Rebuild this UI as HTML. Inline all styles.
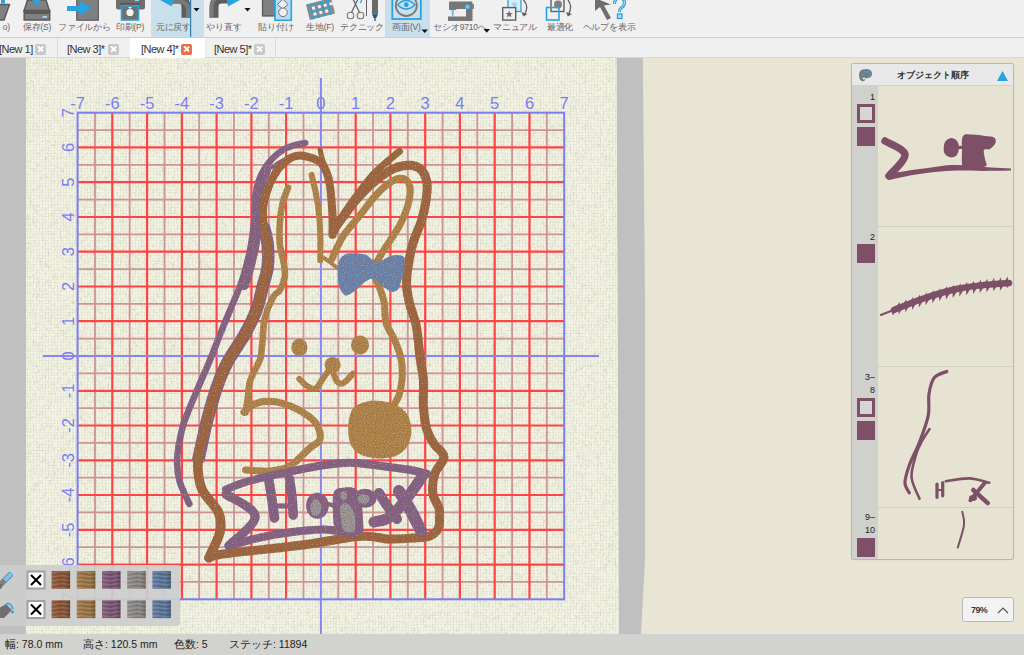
<!DOCTYPE html>
<html><head><meta charset="utf-8">
<style>
*{margin:0;padding:0;box-sizing:border-box}
html,body{width:1024px;height:655px;overflow:hidden;background:#f0f0f0;font-family:"Liberation Sans",sans-serif;position:relative}
.abs{position:absolute}
#toolbar{left:0;top:0;width:1024px;height:38px;background:#f0f0f0;border-bottom:1px solid #cfcfcf}
.tb{position:absolute;top:0;height:37px}
.tb .lbl{position:absolute;top:22px;left:0;width:100%;text-align:center;font-size:8.5px;color:#666;white-space:nowrap;letter-spacing:-0.2px}
#tabs{left:0;top:38px;width:1024px;height:20px;background:#f0f0f0;border-bottom:1px solid #d8d8d8}
.tab{position:absolute;top:2px;height:19px;font-size:11px;color:#333;line-height:19px;white-space:nowrap;letter-spacing:-0.5px}
.cx{position:absolute;top:5.5px;width:11px;height:11px;background:#c8c8c8;border-radius:2px}
.cx:before,.cx:after{content:"";position:absolute;left:1.8px;top:4.6px;width:7.4px;height:1.8px;background:#fff;transform:rotate(45deg)}
.cx:after{transform:rotate(-45deg)}
#leftgray{left:0;top:58px;width:26px;height:597px;background:#c0c0c0}
#fabric{left:26px;top:58px;width:590px;height:576px;background:#ebeadc}
#rgray{left:616px;top:58px;width:27px;height:576px;background:#c0c0c0}
#beige{left:630px;top:58px;width:394px;height:597px;background:#e8e5d4}
#status{left:0;top:634px;width:1024px;height:21px;background:#d2d2ce;font-size:10.5px;color:#222}
#status span{position:absolute;top:4px}
svg text{font-family:"Liberation Sans",sans-serif}
.mn{stroke:#cc9494;stroke-width:1.8}
.mj{stroke:#ff4444;stroke-width:2.2}
.bd{stroke:#7d7df2;stroke-width:2;fill:none}
.ax{stroke:#8a86f0;stroke-width:2}
.lx{font-size:16.5px;fill:#7c7cf6;text-anchor:middle}
.ly{font-size:16.5px;fill:#7c7cf6;text-anchor:middle}
#pal{left:0;top:565px;width:180px;height:61px;background:rgba(205,205,205,.92);border-radius:0 3px 3px 0}
.sw{position:absolute;width:19px;height:19px}
.xb{position:absolute;width:19px;height:19px;background:#fff;border:2px solid #a8a8a8}
#panel{left:851px;top:63px;width:163px;height:497px;background:#e7e3d2;border:1px solid #b9b9b4;border-radius:3px;box-shadow:0 0 1px rgba(0,0,0,.2)}
#phead{left:0;top:0;width:161px;height:22px;background:#e8e8e8;border-bottom:1px solid #d0d0cc}
#pcol{left:0;top:22px;width:26px;height:473px;background:#d0d0cc}
.num{position:absolute;font-size:9px;color:#222;text-align:right;width:23px;left:0}
.osq{position:absolute;left:4.5px;width:18.5px;height:18.5px;border:3px solid #7e5068;background:#d6d6d2}
.fsq{position:absolute;left:4.5px;width:18.5px;height:18.5px;background:#7e5068}
.sep{position:absolute;left:26px;width:135px;height:1px;background:#d0cfc5}
#zoom{left:962px;top:597px;width:52px;height:25px;background:#f3f3f3;border:1px solid #b8b8b8;border-radius:3px;font-size:9px;color:#222}
</style></head><body>
<div id="toolbar" class="abs">
<div class="abs" style="left:151px;top:0;width:53px;height:37px;background:#c9e0ec"></div>
<div class="abs" style="left:385px;top:0;width:45px;height:37px;background:#c9e0ec"></div>
<svg class="abs" style="left:0;top:0" width="640" height="37" viewBox="0 0 640 37">
<!-- folder partial -->
<rect x="1" y="0" width="4" height="3.5" fill="#29a3e0"/>
<path d="M-2,4.5 L9.5,4.5 L4,20 L-2,20 Z" fill="#808080" stroke="#5a5a5a" stroke-width="1.5" stroke-linejoin="round"/>
<!-- save -->
<path d="M27.5,0 L46,0 L49.5,11 L24,11 Z" fill="#808080" stroke="#5a5a5a" stroke-width="1.5"/>
<path d="M32.5,0 L40.5,0 L36.5,7 Z" fill="#29a3e0"/>
<rect x="24.2" y="10.5" width="25.5" height="9.5" fill="#808080" stroke="#5a5a5a" stroke-width="1.5"/>
<rect x="24.2" y="10.5" width="25.5" height="3.5" fill="#5a5a5a"/>
<rect x="42.5" y="16" width="4.5" height="1.8" fill="#9fd4f0"/>
<!-- file from -->
<rect x="76.8" y="-1" width="21.5" height="21.2" fill="#808080" stroke="#5a5a5a" stroke-width="1.2"/>
<rect x="67" y="6" width="14" height="5" fill="#29a3e0"/>
<path d="M80,1 L92,8.5 L80,15 Z" fill="#29a3e0"/>
<!-- print -->
<path d="M116,-2 L145,-2 L145,7.5 Q145,9.5 143,9.5 L118,9.5 Q116,9.5 116,7.5 Z" fill="#6e6e6e"/>
<rect x="120" y="3" width="20" height="1.5" fill="#555"/>
<rect x="135" y="-1" width="4" height="2" fill="#9fd4f0"/>
<rect x="121.5" y="6" width="17" height="14" fill="#707070" stroke="#29a3e0" stroke-width="1.6"/>
<circle cx="130" cy="12.5" r="3.6" fill="#f4f4f4"/>
<path d="M128,7 L132,7 L130,9 Z" fill="#f4f4f4"/>
<!-- undo -->
<path d="M168,-1 L178,-1 Q186,-1 186,7 L186,17.7" stroke="#5e5e5e" stroke-width="9" fill="none"/>
<path d="M172,1.5 L178,1.5 Q188,1.5 188,9 L188,17.7" stroke="#7a7a7a" stroke-width="4" fill="none"/>
<path d="M160,0 L173,0 L172,6.5 Z" fill="#29a3e0"/>
<rect x="190" y="0" width="1.2" height="37" fill="#2f7fb0"/>
<path d="M193.5,8 L199.5,8 L196.5,11.5 Z" fill="#111"/>
<!-- redo -->
<path d="M232,-1 L222,-1 Q214,-1 214,7 L214,17.7" stroke="#5e5e5e" stroke-width="9" fill="none"/>
<path d="M228,-3.5 L222,-3.5 Q211.7,-3.5 211.7,7 L211.7,17.7" stroke="#7a7a7a" stroke-width="4" fill="none"/>
<path d="M240,0 L227,0 L228,6.5 Z" fill="#29a3e0"/>
<path d="M244.5,8 L250.5,8 L247.5,11.5 Z" fill="#111"/>
<!-- paste -->
<rect x="262.5" y="-1" width="12.5" height="17" fill="#808080" stroke="#555" stroke-width="1.2"/>
<rect x="275" y="-1" width="16.3" height="21.3" fill="#b4def4" stroke="#29a3e0" stroke-width="1.6"/>
<path d="M282.8,-1 L288,4.5 L282.8,9 L277.5,4.5 Z" fill="#f0f0f0" stroke="#666" stroke-width="0.9"/>
<circle cx="283" cy="12.3" r="4.3" fill="#f0f0f0" stroke="#666" stroke-width="0.9"/>
<!-- fabric -->
<g transform="translate(320.5 9) rotate(-14)">
<rect x="-13" y="-8" width="26" height="16" fill="#8a8a8a"/>
<g fill="#29a3e0">
<rect x="-11" y="-7" width="3" height="3"/><rect x="-5" y="-7" width="3" height="3"/><rect x="1" y="-7" width="3" height="3"/><rect x="7" y="-7" width="3" height="3"/>
<rect x="-11" y="-1" width="3" height="3"/><rect x="-5" y="-1" width="3" height="3"/><rect x="1" y="-1" width="3" height="3"/><rect x="7" y="-1" width="3" height="3"/>
<rect x="-11" y="5" width="3" height="3"/><rect x="-5" y="5" width="3" height="3"/><rect x="1" y="5" width="3" height="3"/><rect x="7" y="5" width="3" height="3"/>
</g>
<g fill="#f2f2f2">
<rect x="-8" y="-4" width="3" height="3"/><rect x="-2" y="-4" width="3" height="3"/><rect x="4" y="-4" width="3" height="3"/><rect x="10" y="-4" width="3" height="3"/>
<rect x="-8" y="2" width="3" height="3"/><rect x="-2" y="2" width="3" height="3"/><rect x="4" y="2" width="3" height="3"/>
</g>
</g>
<!-- technique: scissors + pen -->
<circle cx="350.5" cy="15.5" r="3.3" fill="none" stroke="#777" stroke-width="1.1"/>
<circle cx="360.5" cy="15.5" r="3.3" fill="none" stroke="#777" stroke-width="1.1"/>
<path d="M351.5,12.5 L358,-1 M359.5,12.5 L353,-1" stroke="#666" stroke-width="1.3"/>
<path d="M360,3 Q362,1 361.5,-1" stroke="#29a3e0" stroke-width="1.2" fill="none"/>
<path d="M366.5,0 L366.5,16" stroke="#666" stroke-width="1"/>
<rect x="372" y="-1" width="6" height="15" fill="#6a6a6a"/>
<path d="M372,14 L378,14 L376,18.5 L374,18.5 Z" fill="#4a4a4a"/>
<rect x="374" y="18" width="2" height="3" fill="#29a3e0"/>
<rect x="372" y="13.5" width="6" height="1" fill="#29a3e0"/>
<!-- screen -->
<rect x="392.3" y="-1" width="28.5" height="20" fill="none" stroke="#29a3e0" stroke-width="1.8"/>
<circle cx="406.3" cy="5.5" r="10.5" fill="none" stroke="#7a7a7a" stroke-width="1.8"/>
<path d="M397.5,4.8 Q406.3,-4 415,4.8 Q406.3,13.5 397.5,4.8 Z" fill="none" stroke="#29a3e0" stroke-width="1.6"/>
<circle cx="406.3" cy="4.7" r="2.4" fill="#29a3e0"/>
<path d="M421.5,29.5 L428,29.5 L424.75,33 Z" fill="#111"/>
<!-- sewing machine -->
<path d="M449,2 Q449,1.5 450,1.5 L472,1.5 L472,14 L466,14 L466,9 L458,9 Q455,9 455,11 L455,10 L449,10 Z" fill="#777"/>
<rect x="466" y="2" width="6.5" height="15" fill="#777"/>
<rect x="448" y="16.5" width="24.5" height="4.5" fill="#777"/>
<rect x="472.5" y="4" width="1.2" height="5" fill="#555"/>
<circle cx="467.5" cy="6.8" r="2.4" fill="#7cc4ec" stroke="#29a3e0" stroke-width="0.8"/>
<rect x="451.5" y="10" width="2.5" height="4" fill="#7cc4ec"/>
<rect x="452.3" y="14" width="1" height="2.5" fill="#29a3e0"/>
<path d="M483.5,29 L490,29 L486.75,32.8 Z" fill="#111"/>
<!-- manual -->
<rect x="508" y="-1" width="13" height="12.5" fill="#d8ecf8" stroke="#29a3e0" stroke-width="1.3"/>
<path d="M512,3 Q514.5,1 514.5,4 Q514.5,1 517,3 Q517,6 514.5,8 Q512,6 512,3Z" fill="#9fd4f0"/>
<rect x="502.7" y="7.6" width="13" height="12.5" fill="#eeeeee" stroke="#606060" stroke-width="1.4"/>
<path d="M509.2,10.5 L510.2,13 L512.7,13.2 L510.8,14.8 L511.5,17.3 L509.2,15.9 L506.9,17.3 L507.6,14.8 L505.7,13.2 L508.2,13 Z" fill="#707070"/>
<path d="M523.5,0 Q529.5,6 524.5,14.5" stroke="#606060" stroke-width="1.3" fill="none"/>
<path d="M521.5,12 L523.3,16.5 L527.5,14 Z" fill="#606060"/>
<!-- optimize -->
<rect x="551" y="-1" width="13" height="12.5" fill="#eeeeee" stroke="#606060" stroke-width="1.4"/>
<circle cx="558" cy="4.5" r="4" fill="#808080"/>
<rect x="546.5" y="7.5" width="12.5" height="12.5" fill="none" stroke="#29a3e0" stroke-width="1.6"/>
<path d="M568,0 Q573,6 568.5,14.5" stroke="#606060" stroke-width="1.3" fill="none"/>
<path d="M566,12 L567.8,16.5 L572,14 Z" fill="#606060"/>
<!-- help -->
<path d="M595,-2 L595,11 L600,7 L607,20 L611,18 L604,5.5 L611,4.5 Z" fill="#6e6e6e"/>
<path d="M614.5,4 Q614.5,-2 619.5,-2 Q624.5,-2 624.5,3 Q624.5,6 621,8 Q619.5,9 619.5,12" stroke="#29a3e0" stroke-width="3" fill="none"/>
<path d="M614.5,4 Q614.5,-2 619.5,-2 Q624.5,-2 624.5,3 Q624.5,6 621,8 Q619.5,9 619.5,12" stroke="#b4def4" stroke-width="1" fill="none"/>
<rect x="617.5" y="14" width="4.5" height="4.5" fill="#b4def4" stroke="#29a3e0" stroke-width="1.3"/>
</svg>
<div class="tb" style="left:-10px;width:20px"><div class="lbl" style="text-align:right">o)</div></div>
<div class="tb" style="left:16px;width:42px"><div class="lbl">保存(S)</div></div>
<div class="tb" style="left:58px;width:50px"><div class="lbl">ファイルから</div></div>
<div class="tb" style="left:108px;width:44px"><div class="lbl">印刷(P)</div></div>
<div class="tb" style="left:150px;width:47px"><div class="lbl">元に戻す</div></div>
<div class="tb" style="left:200px;width:48px"><div class="lbl">やり直す</div></div>
<div class="tb" style="left:252px;width:48px"><div class="lbl">貼り付け</div></div>
<div class="tb" style="left:298px;width:44px"><div class="lbl">生地(F)</div></div>
<div class="tb" style="left:338px;width:48px"><div class="lbl">テクニック</div></div>
<div class="tb" style="left:383px;width:47px"><div class="lbl">画面(V)</div></div>
<div class="tb" style="left:430px;width:60px"><div class="lbl">セシオ9710へ</div></div>
<div class="tb" style="left:490px;width:50px"><div class="lbl">マニュアル</div></div>
<div class="tb" style="left:535px;width:50px"><div class="lbl">最適化</div></div>
<div class="tb" style="left:580px;width:58px"><div class="lbl">ヘルプを表示</div></div>

</div>
<div id="tabs" class="abs">
<div class="abs" style="left:57px;top:0;width:1px;height:19px;background:#dcdcdc"></div>
<div class="abs" style="left:130px;top:0;width:75px;height:20px;background:#ffffff"></div>
<div class="abs" style="left:275px;top:0;width:1px;height:19px;background:#dcdcdc"></div>
<div class="tab" style="left:-1px">[New 1]</div><div class="cx" style="left:35px"></div>
<div class="tab" style="left:67px">[New 3]*</div><div class="cx" style="left:108px"></div>
<div class="tab" style="left:141px">[New 4]*</div><div class="cx" style="left:181px;background:#e8704a"></div>
<div class="tab" style="left:214px">[New 5]*</div><div class="cx" style="left:254px"></div>

</div>
<div id="leftgray" class="abs"></div>
<div id="beige" class="abs"></div>
<svg class="abs" style="left:0;top:0" width="1024" height="655" viewBox="0 0 1024 655">
<defs><clipPath id="fc"><polygon points="26,58 616.5,58 618.9,655 26,655"/></clipPath>
<filter id="lin" x="0" y="0" width="100%" height="100%" filterUnits="userSpaceOnUse">
<feTurbulence type="fractalNoise" baseFrequency="1.6 0.25" numOctaves="1" seed="4" result="n1"/>
<feColorMatrix in="n1" type="matrix" values="0 0 0 0 0.45  0 0 0 0 0.45  0 0 0 0 0.38  0 0 0 1.0 -0.5" result="v"/>
<feTurbulence type="fractalNoise" baseFrequency="0.25 1.6" numOctaves="1" seed="9" result="n2"/>
<feColorMatrix in="n2" type="matrix" values="0 0 0 0 0.45  0 0 0 0 0.45  0 0 0 0 0.38  0 0 0 0.8 -0.4" result="h"/>
<feMerge><feMergeNode in="v"/><feMergeNode in="h"/></feMerge>
</filter>
<pattern id="weave" width="3" height="3" patternUnits="userSpaceOnUse"><rect x="0" y="0" width="1" height="3" fill="rgba(90,90,60,.05)"/><rect x="0" y="0" width="3" height="1" fill="rgba(90,90,60,.035)"/></pattern>
<filter id="st" x="0" y="0" width="1024" height="655" filterUnits="userSpaceOnUse">
<feTurbulence type="fractalNoise" baseFrequency="0.9" numOctaves="1" seed="2" result="n"/>
<feColorMatrix in="n" type="matrix" values="0 0 0 0 0.22  0 0 0 0 0.13  0 0 0 0 0.07  0 0 0 2.4 -1.05" result="d"/>
<feComposite in="d" in2="SourceAlpha" operator="in" result="dd"/>
<feColorMatrix in="n" type="matrix" values="0 0 0 0 0.8  0 0 0 0 0.62  0 0 0 0 0.42  0 0 0 -1.8 0.7" result="l"/>
<feComposite in="l" in2="SourceAlpha" operator="in" result="ll"/>
<feMerge><feMergeNode in="SourceGraphic"/><feMergeNode in="dd"/><feMergeNode in="ll"/></feMerge>
</filter>
</defs>
<polygon points="616.3,58 642.8,58 645,300 645,560 641,634 632.5,655 618.8,655" fill="#c0c0c0"/>
<g clip-path="url(#fc)">
<rect x="26" y="58" width="594" height="597" fill="#f5f5e5"/>
<rect x="26" y="58" width="594" height="597" filter="url(#lin)"/>
<rect x="26" y="58" width="594" height="597" fill="url(#weave)"/>
<line x1="95.0" y1="112.7" x2="95.0" y2="599.3" class="mn"/>
<line x1="77.6" y1="130.1" x2="564.2" y2="130.1" class="mn"/>
<line x1="129.7" y1="112.7" x2="129.7" y2="599.3" class="mn"/>
<line x1="77.6" y1="164.8" x2="564.2" y2="164.8" class="mn"/>
<line x1="164.5" y1="112.7" x2="164.5" y2="599.3" class="mn"/>
<line x1="77.6" y1="199.6" x2="564.2" y2="199.6" class="mn"/>
<line x1="199.2" y1="112.7" x2="199.2" y2="599.3" class="mn"/>
<line x1="77.6" y1="234.3" x2="564.2" y2="234.3" class="mn"/>
<line x1="234.0" y1="112.7" x2="234.0" y2="599.3" class="mn"/>
<line x1="77.6" y1="269.1" x2="564.2" y2="269.1" class="mn"/>
<line x1="268.8" y1="112.7" x2="268.8" y2="599.3" class="mn"/>
<line x1="77.6" y1="303.9" x2="564.2" y2="303.9" class="mn"/>
<line x1="303.5" y1="112.7" x2="303.5" y2="599.3" class="mn"/>
<line x1="77.6" y1="338.6" x2="564.2" y2="338.6" class="mn"/>
<line x1="338.3" y1="112.7" x2="338.3" y2="599.3" class="mn"/>
<line x1="77.6" y1="373.4" x2="564.2" y2="373.4" class="mn"/>
<line x1="373.0" y1="112.7" x2="373.0" y2="599.3" class="mn"/>
<line x1="77.6" y1="408.1" x2="564.2" y2="408.1" class="mn"/>
<line x1="407.8" y1="112.7" x2="407.8" y2="599.3" class="mn"/>
<line x1="77.6" y1="442.9" x2="564.2" y2="442.9" class="mn"/>
<line x1="442.6" y1="112.7" x2="442.6" y2="599.3" class="mn"/>
<line x1="77.6" y1="477.7" x2="564.2" y2="477.7" class="mn"/>
<line x1="477.3" y1="112.7" x2="477.3" y2="599.3" class="mn"/>
<line x1="77.6" y1="512.4" x2="564.2" y2="512.4" class="mn"/>
<line x1="512.1" y1="112.7" x2="512.1" y2="599.3" class="mn"/>
<line x1="77.6" y1="547.2" x2="564.2" y2="547.2" class="mn"/>
<line x1="546.8" y1="112.7" x2="546.8" y2="599.3" class="mn"/>
<line x1="77.6" y1="581.9" x2="564.2" y2="581.9" class="mn"/>
<line x1="112.3" y1="112.7" x2="112.3" y2="599.3" class="mj"/>
<line x1="77.6" y1="147.4" x2="564.2" y2="147.4" class="mj"/>
<line x1="147.1" y1="112.7" x2="147.1" y2="599.3" class="mj"/>
<line x1="77.6" y1="182.2" x2="564.2" y2="182.2" class="mj"/>
<line x1="181.9" y1="112.7" x2="181.9" y2="599.3" class="mj"/>
<line x1="77.6" y1="217.0" x2="564.2" y2="217.0" class="mj"/>
<line x1="216.6" y1="112.7" x2="216.6" y2="599.3" class="mj"/>
<line x1="77.6" y1="251.7" x2="564.2" y2="251.7" class="mj"/>
<line x1="251.4" y1="112.7" x2="251.4" y2="599.3" class="mj"/>
<line x1="77.6" y1="286.5" x2="564.2" y2="286.5" class="mj"/>
<line x1="286.1" y1="112.7" x2="286.1" y2="599.3" class="mj"/>
<line x1="77.6" y1="321.2" x2="564.2" y2="321.2" class="mj"/>
<line x1="355.7" y1="112.7" x2="355.7" y2="599.3" class="mj"/>
<line x1="77.6" y1="390.8" x2="564.2" y2="390.8" class="mj"/>
<line x1="390.4" y1="112.7" x2="390.4" y2="599.3" class="mj"/>
<line x1="77.6" y1="425.5" x2="564.2" y2="425.5" class="mj"/>
<line x1="425.2" y1="112.7" x2="425.2" y2="599.3" class="mj"/>
<line x1="77.6" y1="460.3" x2="564.2" y2="460.3" class="mj"/>
<line x1="459.9" y1="112.7" x2="459.9" y2="599.3" class="mj"/>
<line x1="77.6" y1="495.0" x2="564.2" y2="495.0" class="mj"/>
<line x1="494.7" y1="112.7" x2="494.7" y2="599.3" class="mj"/>
<line x1="77.6" y1="529.8" x2="564.2" y2="529.8" class="mj"/>
<line x1="529.5" y1="112.7" x2="529.5" y2="599.3" class="mj"/>
<line x1="77.6" y1="564.6" x2="564.2" y2="564.6" class="mj"/>
<rect x="77.6" y="112.7" width="486.6" height="486.6" class="bd"/>
<line x1="320.9" y1="77.9" x2="320.9" y2="634.1" class="ax"/>
<line x1="42.8" y1="356.0" x2="599.0" y2="356.0" class="ax"/>
<text x="77.6" y="109" class="lx">-7</text>
<text transform="translate(73.8 599.3) rotate(-90)" x="0" y="0" class="ly">-7</text>
<text x="112.3" y="109" class="lx">-6</text>
<text transform="translate(73.8 564.6) rotate(-90)" x="0" y="0" class="ly">-6</text>
<text x="147.1" y="109" class="lx">-5</text>
<text transform="translate(73.8 529.8) rotate(-90)" x="0" y="0" class="ly">-5</text>
<text x="181.9" y="109" class="lx">-4</text>
<text transform="translate(73.8 495.0) rotate(-90)" x="0" y="0" class="ly">-4</text>
<text x="216.6" y="109" class="lx">-3</text>
<text transform="translate(73.8 460.3) rotate(-90)" x="0" y="0" class="ly">-3</text>
<text x="251.4" y="109" class="lx">-2</text>
<text transform="translate(73.8 425.5) rotate(-90)" x="0" y="0" class="ly">-2</text>
<text x="286.1" y="109" class="lx">-1</text>
<text transform="translate(73.8 390.8) rotate(-90)" x="0" y="0" class="ly">-1</text>
<text x="320.9" y="109" class="lx">0</text>
<text transform="translate(73.8 356.0) rotate(-90)" x="0" y="0" class="ly">0</text>
<text x="355.7" y="109" class="lx">1</text>
<text transform="translate(73.8 321.2) rotate(-90)" x="0" y="0" class="ly">1</text>
<text x="390.4" y="109" class="lx">2</text>
<text transform="translate(73.8 286.5) rotate(-90)" x="0" y="0" class="ly">2</text>
<text x="425.2" y="109" class="lx">3</text>
<text transform="translate(73.8 251.7) rotate(-90)" x="0" y="0" class="ly">3</text>
<text x="459.9" y="109" class="lx">4</text>
<text transform="translate(73.8 217.0) rotate(-90)" x="0" y="0" class="ly">4</text>
<text x="494.7" y="109" class="lx">5</text>
<text transform="translate(73.8 182.2) rotate(-90)" x="0" y="0" class="ly">5</text>
<text x="529.5" y="109" class="lx">6</text>
<text transform="translate(73.8 147.4) rotate(-90)" x="0" y="0" class="ly">6</text>
<text x="564.2" y="109" class="lx">7</text>
<text transform="translate(73.8 112.7) rotate(-90)" x="0" y="0" class="ly">7</text>
<g filter="url(#st)">
<path d="M305.2,143.0 C303.2,143.4 297.1,144.3 293.4,145.5 C289.6,146.7 286.2,147.8 282.7,150.0 C279.2,152.2 275.4,155.5 272.5,158.5 C269.6,161.5 267.2,164.4 265.0,168.0 C262.8,171.6 260.6,175.5 259.0,180.0 C257.4,184.5 256.3,187.8 255.5,195.0 C254.7,202.2 254.8,214.7 254.0,223.0 C253.2,231.3 252.3,237.7 251.0,245.0 C249.7,252.3 247.8,260.3 246.0,267.0 C244.2,273.7 242.8,278.6 240.5,285.0 C238.2,291.4 235.3,297.5 232.0,305.6 C228.7,313.7 224.2,324.1 220.5,333.4 C216.8,342.7 213.2,352.3 209.5,361.2 C205.8,370.1 202.1,378.3 198.5,386.8 C194.9,395.3 190.8,404.9 188.0,412.0 C185.2,419.1 183.8,421.7 182.0,429.5 C180.2,437.3 177.5,450.3 177.1,458.9 C176.7,467.5 177.5,473.4 179.5,480.9 C181.5,488.4 187.7,500.1 189.3,504.0" stroke="#83608a" stroke-width="6.5" fill="none" stroke-linecap="round" stroke-linejoin="round"/>
<path d="M266.0,170.0 C265.2,172.0 262.3,177.7 261.0,182.0 C259.7,186.3 258.7,189.2 258.0,196.0 C257.3,202.8 257.6,214.8 257.0,223.0 C256.4,231.2 255.8,237.7 254.5,245.0 C253.2,252.3 251.2,260.3 249.5,267.0 C247.8,273.7 244.9,282.0 244.0,285.0" stroke="#83608a" stroke-width="10" fill="none" stroke-linecap="round" stroke-linejoin="round"/>
<path d="M272.0,167.4 C273.3,166.5 277.0,163.7 280.0,162.0 C283.0,160.3 288.5,158.0 290.2,157.2" stroke="#83608a" stroke-width="4" fill="none" stroke-linecap="round" stroke-linejoin="round"/>
<path d="M264.0,227.7 C264.6,230.5 267.1,238.3 267.7,244.8 C268.3,251.3 268.5,259.9 267.7,266.8 C266.9,273.7 264.7,279.1 262.8,286.3 C260.9,293.5 259.6,301.8 256.5,310.0 C253.4,318.2 248.8,327.1 244.0,335.6 C239.2,344.1 232.5,352.7 228.0,361.2 C223.5,369.7 220.4,377.2 217.0,386.8 C213.6,396.4 209.8,410.7 207.5,418.9 C205.2,427.1 205.0,429.3 203.5,436.0 C202.0,442.7 199.3,455.1 198.5,458.9" stroke="#83608a" stroke-width="12.5" fill="none" stroke-linecap="round" stroke-linejoin="round"/>
<path d="M208.9,557.8 C210.7,553.5 218.3,539.7 219.9,532.2 C221.5,524.7 221.7,519.9 218.6,512.6 C215.5,505.3 204.9,497.1 201.5,488.2 C198.1,479.2 197.6,467.6 197.9,458.9 C198.2,450.2 201.9,442.7 203.5,436.0 C205.1,429.3 205.2,427.1 207.5,418.9 C209.8,410.7 213.6,396.4 217.0,386.8 C220.4,377.2 223.5,369.7 228.0,361.2 C232.5,352.7 239.2,344.1 244.0,335.6 C248.8,327.1 253.4,318.2 256.5,310.0 C259.6,301.8 260.9,293.5 262.8,286.3 C264.7,279.1 266.9,273.7 267.7,266.8 C268.5,259.9 268.3,251.3 267.7,244.8 C267.1,238.3 264.8,233.5 264.0,227.7 C263.2,221.9 262.9,214.7 263.0,210.0 C263.1,205.3 263.4,203.8 264.6,199.4 C265.8,195.0 267.7,188.6 270.0,183.4 C272.3,178.2 275.3,172.6 278.5,168.5 C281.7,164.4 285.6,161.0 289.1,158.8 C292.7,156.7 295.9,155.7 299.8,155.6 C303.7,155.5 309.0,157.1 312.6,158.3 C316.2,159.6 318.9,160.8 321.2,163.1 C323.5,165.4 325.1,168.7 326.5,172.0 C327.9,175.3 328.8,179.2 329.5,183.0 C330.2,186.8 330.5,189.6 331.0,195.0 C331.5,200.4 332.2,208.9 332.5,215.5 C332.8,222.1 332.5,231.5 332.5,234.7" stroke="#a0653c" stroke-width="8" fill="none" stroke-linecap="round" stroke-linejoin="round"/>
<path d="M208.9,557.8 C210.7,553.5 218.3,539.7 219.9,532.2 C221.5,524.7 221.7,519.9 218.6,512.6 C215.5,505.3 204.9,497.1 201.5,488.2 C198.1,479.2 197.6,467.6 197.9,458.9 C198.2,450.2 201.9,442.7 203.5,436.0 C205.1,429.3 205.2,427.1 207.5,418.9 C209.8,410.7 213.6,396.4 217.0,386.8 C220.4,377.2 223.5,369.7 228.0,361.2 C232.5,352.7 239.2,344.1 244.0,335.6 C248.8,327.1 253.4,318.2 256.5,310.0 C259.6,301.8 260.9,293.5 262.8,286.3 C264.7,279.1 266.9,270.1 267.7,266.8" stroke="#a0653c" stroke-width="9.5" fill="none" stroke-linecap="round" stroke-linejoin="round"/>
<path d="M208.9,557.8 C210.8,557.2 210.8,555.9 220.0,554.5 C229.2,553.1 249.3,551.1 264.0,549.4 C278.6,547.7 293.3,546.4 307.9,544.3 C322.5,542.2 341.4,538.3 351.8,537.0 C362.2,535.7 363.6,536.2 370.0,536.5 C376.4,536.8 383.0,538.8 390.0,539.0 C397.0,539.2 405.4,538.5 412.0,538.0 C418.6,537.5 425.3,537.7 429.7,536.0 C434.1,534.3 436.9,531.5 438.5,528.0 C440.1,524.5 439.3,518.4 439.4,515.0 C439.4,511.6 439.9,511.1 438.8,507.5 C437.7,503.9 433.6,499.2 432.9,493.6 C432.2,488.0 432.9,479.8 434.8,473.7 C436.7,467.6 444.1,461.9 444.0,457.0 C443.9,452.1 437.0,448.7 434.1,444.0 C431.2,439.3 428.3,435.1 426.5,428.7 C424.7,422.3 423.9,413.9 423.4,405.8 C422.9,397.7 423.9,387.4 423.4,379.8 C422.9,372.2 421.6,369.1 420.4,360.0 C419.2,350.9 418.0,334.8 416.2,325.5 C414.4,316.2 411.3,311.1 409.7,304.0 C408.1,296.9 406.5,290.5 406.5,282.7 C406.5,274.9 408.4,264.1 409.7,257.0 C410.9,249.9 412.0,246.2 414.0,240.0 C416.0,233.8 419.8,226.3 421.8,219.7 C423.8,213.1 425.1,206.6 426.0,200.5 C426.9,194.4 427.7,188.4 427.0,183.4 C426.3,178.4 424.5,173.6 421.8,170.6 C419.1,167.6 415.6,165.7 411.0,165.3 C406.4,165.0 400.0,165.8 394.0,168.5 C388.0,171.2 381.2,176.0 374.8,181.3 C368.4,186.6 362.0,193.1 355.6,200.5 C349.2,207.9 339.5,221.8 336.3,226.0" stroke="#a0653c" stroke-width="9" fill="none" stroke-linecap="round" stroke-linejoin="round"/>
<path d="M320.1,149.5 C320.4,150.9 321.2,155.2 322.0,158.0 C322.8,160.8 324.5,164.7 325.0,166.0" stroke="#a0653c" stroke-width="5" fill="none" stroke-linecap="round" stroke-linejoin="round"/>
<path d="M333.0,234.7 C334.6,231.5 338.6,222.3 342.7,215.5 C346.8,208.7 352.3,201.1 357.7,194.0 C363.1,186.9 367.9,179.8 374.8,172.7 C381.8,165.6 395.3,154.9 399.4,151.4" stroke="#a0653c" stroke-width="7" fill="none" stroke-linecap="round" stroke-linejoin="round"/>
<path d="M331.8,259.2 C333.6,255.5 338.0,244.1 342.7,236.8 C347.4,229.5 354.1,222.6 359.8,215.5 C365.5,208.4 371.3,199.9 377.0,194.0 C382.7,188.1 389.4,182.7 394.0,180.2 C398.6,177.7 402.0,177.8 404.7,179.1 C407.4,180.3 409.4,183.4 410.0,187.7 C410.6,192.0 409.6,198.8 408.0,204.8 C406.4,210.9 403.4,217.9 400.4,224.0 C397.3,230.1 393.3,235.4 389.7,241.1 C386.1,246.8 381.8,253.0 379.0,258.2 C376.2,263.3 373.2,267.9 373.0,272.0 C372.8,276.1 375.8,277.7 377.7,282.7 C379.6,287.7 382.7,295.2 384.1,302.0 C385.5,308.8 384.4,316.9 386.2,323.3 C388.0,329.7 392.3,334.3 394.8,340.4 C397.3,346.5 400.1,353.4 401.3,360.0 C402.5,366.6 402.4,373.9 402.0,379.8 C401.6,385.7 400.3,391.0 399.0,395.1 C397.7,399.2 395.2,402.8 394.4,404.3" stroke="#b48649" stroke-width="7" fill="none" stroke-linecap="round" stroke-linejoin="round"/>
<path d="M324.3,258.2 C325.4,259.0 328.9,261.4 331.0,263.0 C333.1,264.6 336.1,267.0 337.1,267.8" stroke="#b48649" stroke-width="4" fill="none" stroke-linecap="round" stroke-linejoin="round"/>
<path d="M311.6,174.9 C312.3,178.1 314.7,187.2 316.0,194.0 C317.3,200.8 318.5,208.4 319.2,215.5 C319.9,222.6 320.1,229.3 320.3,236.8 C320.5,244.3 320.3,256.4 320.3,260.3" stroke="#b48649" stroke-width="6" fill="none" stroke-linecap="round" stroke-linejoin="round"/>
<path d="M288.1,187.7 C287.2,190.2 284.1,197.2 282.7,203.0 C281.3,208.8 280.4,215.8 279.9,222.8 C279.4,229.8 279.3,238.3 279.9,244.8 C280.5,251.3 282.8,256.6 283.6,261.9 C284.4,267.2 285.4,271.9 284.8,276.6 C284.2,281.3 281.9,286.6 280.0,290.0 C278.1,293.4 275.8,292.2 273.2,297.0 C270.6,301.8 266.5,311.4 264.7,318.5 C262.9,325.6 263.3,333.2 262.6,339.8 C261.9,346.4 261.7,353.1 260.5,358.0 C259.3,362.9 257.3,364.9 255.5,369.0 C253.7,373.1 251.0,377.5 249.7,382.6 C248.4,387.7 248.3,394.7 247.6,399.7 C246.9,404.7 245.8,410.4 245.5,412.5" stroke="#b48649" stroke-width="6.5" fill="none" stroke-linecap="round" stroke-linejoin="round"/>
<path d="M243.9,412.2 C245.8,410.8 250.8,405.4 255.6,403.6 C260.4,401.8 266.6,401.0 272.7,401.5 C278.8,402.0 285.9,404.3 292.0,406.8 C298.1,409.3 304.7,413.3 309.0,416.5 C313.3,419.7 315.8,422.1 317.6,426.0 C319.4,429.9 321.0,436.3 319.7,440.0 C318.4,443.7 314.8,443.7 309.8,448.0 C304.9,452.3 296.6,462.0 290.0,465.8 C283.4,469.6 277.4,470.3 270.0,471.0 C262.6,471.7 249.6,470.1 245.5,469.9" stroke="#b48649" stroke-width="7" fill="none" stroke-linecap="round" stroke-linejoin="round"/>
<path d="M338.4,263.5 C339.4,258.8 341.5,256.4 344.3,254.7 C347.1,253.0 351.6,253.4 355.2,253.4 C358.8,253.4 363.2,253.6 366.1,254.7 C369.0,255.8 370.4,259.1 372.8,260.1 C375.2,261.2 377.7,261.6 380.4,261.0 C383.1,260.4 386.0,257.8 388.8,256.8 C391.6,255.8 394.7,255.0 397.2,255.0 C399.7,255.0 402.6,255.7 403.9,256.8 C405.1,257.9 404.8,259.2 404.7,261.8 C404.6,264.4 403.7,269.1 403.0,272.7 C402.3,276.3 401.5,280.7 400.5,283.6 C399.5,286.5 398.9,289.0 397.2,290.3 C395.5,291.6 393.3,292.2 390.5,291.2 C387.7,290.2 383.2,286.6 380.4,284.5 C377.6,282.4 376.1,279.2 373.7,278.6 C371.3,278.0 368.8,279.4 366.1,281.1 C363.4,282.8 360.9,286.3 357.7,288.7 C354.5,291.1 349.4,294.8 346.8,295.4 C344.2,295.9 343.2,294.1 341.8,292.0 C340.4,289.9 339.0,287.6 338.4,282.8 C337.8,278.1 337.4,268.2 338.4,263.5Z" fill="#6686b4"/>
<ellipse cx="299.4" cy="347.4" rx="8" ry="9" fill="#b48649"/>
<ellipse cx="360" cy="345" rx="9" ry="9.5" fill="#b48649"/>
<ellipse cx="332.6" cy="365" rx="8" ry="8" fill="#b48649"/>
<path d="M299.4,379.0 C300.7,380.2 304.3,384.4 307.0,386.0 C309.7,387.6 312.7,390.2 315.5,388.7 C318.3,387.2 321.5,380.4 324.0,377.0 C326.5,373.6 329.3,369.8 330.4,368.4" stroke="#b48649" stroke-width="6" fill="none" stroke-linecap="round" stroke-linejoin="round"/>
<path d="M333.0,372.0 C333.6,373.5 335.1,379.3 336.8,381.2 C338.5,383.1 340.5,384.6 343.2,383.3 C345.9,382.1 351.3,375.3 352.9,373.7" stroke="#b48649" stroke-width="6" fill="none" stroke-linecap="round" stroke-linejoin="round"/>
<path d="M352.0,410.0 C354.8,405.3 360.3,403.5 365.0,402.0 C369.7,400.5 374.8,400.5 380.0,401.0 C385.2,401.5 391.5,402.8 396.0,405.0 C400.5,407.2 404.4,409.8 407.0,414.0 C409.6,418.2 411.2,424.8 411.4,430.0 C411.6,435.2 410.2,440.8 408.0,445.0 C405.8,449.2 402.3,452.8 398.0,455.0 C393.7,457.2 387.7,458.2 382.0,458.4 C376.3,458.6 369.0,457.9 364.0,456.0 C359.0,454.1 354.6,451.3 352.0,447.0 C349.4,442.7 348.2,436.2 348.2,430.0 C348.2,423.8 349.2,414.7 352.0,410.0Z" fill="#b48649"/>
<path d="M226.0,489.4 C229.2,488.2 238.2,484.2 245.5,482.0 C252.8,479.8 262.6,477.7 270.0,476.0 C277.4,474.3 281.7,473.4 290.0,471.7 C298.3,470.0 309.9,467.3 319.8,465.8 C329.7,464.3 339.6,462.8 349.5,462.8 C359.4,462.8 369.4,464.6 379.3,465.8 C389.2,467.0 401.1,468.5 409.0,469.8 C416.9,471.1 423.9,473.1 426.9,473.7" stroke="#83608a" stroke-width="8" fill="none" stroke-linecap="round" stroke-linejoin="round"/>
<path d="M226.0,494.3 C230.9,498.0 254.8,507.7 255.3,516.3 C255.8,524.9 233.2,540.9 228.8,545.8" stroke="#83608a" stroke-width="9" fill="none" stroke-linecap="round" stroke-linejoin="round"/>
<path d="M228.8,545.8 C232.3,544.8 241.7,542.0 250.0,540.0 C258.3,538.0 266.5,535.7 278.6,534.0 C290.7,532.3 311.3,529.8 322.5,529.6 C333.7,529.4 340.6,532.0 346.0,532.6 C351.4,533.2 353.5,532.9 355.0,533.0" stroke="#83608a" stroke-width="8" fill="none" stroke-linecap="round" stroke-linejoin="round"/>
<path d="M269.0,481.0 C269.5,484.2 271.1,493.8 272.0,500.0 C272.9,506.2 274.1,515.0 274.5,518.0" stroke="#83608a" stroke-width="9.5" fill="none" stroke-linecap="round" stroke-linejoin="round"/>
<path d="M289.5,479.0 C289.9,482.0 291.4,491.0 292.0,497.0 C292.6,503.0 293.0,512.0 293.2,515.0" stroke="#83608a" stroke-width="9.5" fill="none" stroke-linecap="round" stroke-linejoin="round"/>
<path d="M272.0,506.0 C275.3,506.0 288.7,506.0 292.0,506.0" stroke="#83608a" stroke-width="5" fill="none" stroke-linecap="round" stroke-linejoin="round"/>
<path d="M328.0,504.0 C329.2,504.3 333.8,505.7 335.0,506.0" stroke="#83608a" stroke-width="4" fill="none" stroke-linecap="round" stroke-linejoin="round"/>
<ellipse cx="317.4" cy="505.8" rx="11.3" ry="13" fill="#83608a"/>
<ellipse cx="315.7" cy="507.8" rx="5.5" ry="8.5" fill="#9b9a9e"/>
<path d="M334.0,492.0 C336.0,487.4 341.3,488.0 345.0,487.5 C348.7,487.0 353.3,486.9 356.0,489.0 C358.7,491.1 359.8,494.8 361.0,500.0 C362.2,505.2 362.8,514.5 363.0,520.0 C363.2,525.5 364.5,530.6 362.0,533.0 C359.5,535.4 352.3,534.8 348.0,534.5 C343.7,534.2 338.5,534.2 336.0,531.0 C333.5,527.8 333.3,521.5 333.0,515.0 C332.7,508.5 332.0,496.6 334.0,492.0Z" fill="#83608a"/>
<path d="M340.5,506.0 C341.7,503.3 345.7,502.5 348.0,504.0 C350.3,505.5 353.5,510.5 354.5,515.0 C355.5,519.5 355.8,528.3 354.0,531.0 C352.2,533.7 346.2,532.8 344.0,531.0 C341.8,529.2 341.6,524.2 341.0,520.0 C340.4,515.8 339.3,508.7 340.5,506.0Z" fill="#9b9a9e"/>
<ellipse cx="343.7" cy="495.5" rx="3.2" ry="4.6" fill="#9b9a9e"/>
<ellipse cx="365" cy="498.2" rx="11.6" ry="9.5" fill="#83608a"/>
<ellipse cx="363.6" cy="499" rx="6" ry="4.8" fill="#9b9a9e"/>
<path d="M379.0,493.0 C380.5,495.3 385.0,502.7 388.0,507.0 C391.0,511.3 395.5,517.0 397.0,519.0" stroke="#83608a" stroke-width="10" fill="none" stroke-linecap="round" stroke-linejoin="round"/>
<path d="M422.0,477.0 C419.5,480.5 412.3,491.3 407.0,498.0 C401.7,504.7 395.5,513.0 390.0,517.0 C384.5,521.0 376.7,521.2 374.0,522.0" stroke="#83608a" stroke-width="11" fill="none" stroke-linecap="round" stroke-linejoin="round"/>
<path d="M399.0,491.0 C401.0,494.3 407.3,504.3 411.0,511.0 C414.7,517.7 419.3,527.7 421.0,531.0" stroke="#83608a" stroke-width="12" fill="none" stroke-linecap="round" stroke-linejoin="round"/>
</g>
</g>
</svg>
<div id="pal" class="abs">
<svg class="abs" style="left:0;top:0" width="180" height="61">
<defs>
<pattern id="thr" width="19" height="4" patternUnits="userSpaceOnUse"><path d="M0,1 Q5,0 10,1.5 T19,1" stroke="rgba(0,0,0,.25)" stroke-width="0.8" fill="none"/><path d="M0,3 Q6,2.2 12,3.3 T19,3" stroke="rgba(255,255,255,.18)" stroke-width="0.7" fill="none"/></pattern>
<linearGradient id="sh" x1="0" x2="1" y1="0" y2="0"><stop offset="0" stop-color="#fff" stop-opacity=".12"/><stop offset=".5" stop-color="#fff" stop-opacity="0"/><stop offset="1" stop-color="#000" stop-opacity=".22"/></linearGradient>
</defs>
<!-- row icons -->
<g transform="translate(0 5)">
<path d="M-3,14 L9,2 L13,6 L1,18 Z" fill="#808080"/>
<path d="M3,9 L10,2 L13,5 L6,12 Z" fill="#7cc4ec" stroke="#29a3e0" stroke-width="0.8"/>
<path d="M-4,14 L3,14 L1,19 L-4,19Z" fill="#707070"/>
</g>
<g transform="translate(0 35)">
<path d="M-4,10 L6,4 L12,10 L4,18 L-4,18 Z" fill="#707070"/>
<path d="M6,4 Q11,2 13,9" stroke="#29a3e0" stroke-width="1.5" fill="none"/>
<circle cx="12.5" cy="12" r="1.5" fill="#29a3e0"/>
</g>
<g>
<rect x="27.5" y="6.5" width="17" height="17" fill="#fff" stroke="#a0a0a0" stroke-width="2"/>
<path d="M31,10 L41,20 M41,10 L31,20" stroke="#000" stroke-width="2"/>
<rect x="27.5" y="36" width="17" height="17" fill="#fff" stroke="#a0a0a0" stroke-width="2"/>
<path d="M31,39.5 L41,49.5 M41,39.5 L31,49.5" stroke="#000" stroke-width="2"/>
</g>
<g>
<rect x="51.6" y="6" width="18.5" height="17.8" fill="#8b5232"/><rect x="51.6" y="6" width="18.5" height="17.8" fill="url(#thr)"/><rect x="51.6" y="6" width="18.5" height="17.8" fill="url(#sh)"/>
<rect x="76.8" y="6" width="18.5" height="17.8" fill="#9b7340"/><rect x="76.8" y="6" width="18.5" height="17.8" fill="url(#thr)"/><rect x="76.8" y="6" width="18.5" height="17.8" fill="url(#sh)"/>
<rect x="102" y="6" width="18.5" height="17.8" fill="#7a5373"/><rect x="102" y="6" width="18.5" height="17.8" fill="url(#thr)"/><rect x="102" y="6" width="18.5" height="17.8" fill="url(#sh)"/>
<rect x="127.2" y="6" width="18.5" height="17.8" fill="#8a8585"/><rect x="127.2" y="6" width="18.5" height="17.8" fill="url(#thr)"/><rect x="127.2" y="6" width="18.5" height="17.8" fill="url(#sh)"/>
<rect x="152.4" y="6" width="18.5" height="17.8" fill="#58749a"/><rect x="152.4" y="6" width="18.5" height="17.8" fill="url(#thr)"/><rect x="152.4" y="6" width="18.5" height="17.8" fill="url(#sh)"/>
<rect x="51.6" y="35.3" width="18.5" height="17.8" fill="#8b5232"/><rect x="51.6" y="35.3" width="18.5" height="17.8" fill="url(#thr)"/><rect x="51.6" y="35.3" width="18.5" height="17.8" fill="url(#sh)"/>
<rect x="76.8" y="35.3" width="18.5" height="17.8" fill="#9b7340"/><rect x="76.8" y="35.3" width="18.5" height="17.8" fill="url(#thr)"/><rect x="76.8" y="35.3" width="18.5" height="17.8" fill="url(#sh)"/>
<rect x="102" y="35.3" width="18.5" height="17.8" fill="#7a5373"/><rect x="102" y="35.3" width="18.5" height="17.8" fill="url(#thr)"/><rect x="102" y="35.3" width="18.5" height="17.8" fill="url(#sh)"/>
<rect x="127.2" y="35.3" width="18.5" height="17.8" fill="#8a8585"/><rect x="127.2" y="35.3" width="18.5" height="17.8" fill="url(#thr)"/><rect x="127.2" y="35.3" width="18.5" height="17.8" fill="url(#sh)"/>
<rect x="152.4" y="35.3" width="18.5" height="17.8" fill="#58749a"/><rect x="152.4" y="35.3" width="18.5" height="17.8" fill="url(#thr)"/><rect x="152.4" y="35.3" width="18.5" height="17.8" fill="url(#sh)"/>
</g>
</svg>

</div>
<div id="panel" class="abs">
<div id="phead" class="abs"><svg style="position:absolute;left:5px;top:4px" width="16" height="14"><path d="M2,7 Q2,1 8.5,1 Q15,1 15,6 Q15,10 10,10 Q8,10 8,12 Q7,14 4.5,13 Q2,11.5 2,7Z" fill="#7a7a7a"/><circle cx="5.5" cy="6.5" r="1.3" fill="#29a3e0"/><circle cx="8" cy="3.8" r="1.3" fill="#29a3e0"/><circle cx="11.5" cy="4.3" r="1.3" fill="#29a3e0"/><circle cx="12.2" cy="7.5" r="1.3" fill="#29a3e0"/><ellipse cx="7" cy="10.5" rx="1.5" ry="1" fill="#e8e8e8"/></svg>
<div style="position:absolute;left:30px;width:102px;top:5px;text-align:center;font-size:9px;font-weight:bold;color:#333">オブジェクト順序</div>
<svg style="position:absolute;left:144px;top:6px" width="14" height="12"><path d="M1,11 L6.5,1 L12,11Z" fill="#29a3e0"/></svg>
</div>
<div id="pcol" class="abs"></div>
<div class="sep" style="top:162px"></div>
<div class="sep" style="top:302px"></div>
<div class="sep" style="top:443px"></div>
<div class="num" style="top:28px">1</div>
<div class="osq" style="top:40px"></div>
<div class="fsq" style="top:63px"></div>
<div class="num" style="top:168px">2</div>
<div class="fsq" style="top:180px"></div>
<div class="num" style="top:308px">3–</div>
<div class="num" style="top:321px">8</div>
<div class="osq" style="top:334px"></div>
<div class="fsq" style="top:357px"></div>
<div class="num" style="top:448px">9–</div>
<div class="num" style="top:461px">10</div>
<div class="fsq" style="top:474px"></div>
<svg class="abs" style="left:-851px;top:-63px" width="1024" height="655">
<path d="M884.0,140.0 C887.3,142.2 903.3,147.7 904.0,153.5 C904.7,159.3 890.7,171.4 888.0,175.0" stroke="#7e5068" stroke-width="7.5" fill="none" stroke-linecap="round" stroke-linejoin="round"/>
<path d="M884,174 C900,170 920,168 944,164.5 C960,163 975,165.5 990,166.5 L1010,167.5 L1010,169.5 C990,170 975,170 955,169.5 C930,170 905,175 888,179 Z" fill="#7e5068"/>
<path d="M944.0,141.0 C945.2,138.7 948.0,137.2 950.0,137.0 C952.0,136.8 954.7,138.3 956.0,140.0 C957.3,141.7 958.2,144.5 958.0,147.0 C957.8,149.5 956.7,153.5 955.0,155.0 C953.3,156.5 950.0,156.7 948.0,156.0 C946.0,155.3 943.7,153.5 943.0,151.0 C942.3,148.5 942.8,143.3 944.0,141.0Z" fill="#7e5068"/>
<path d="M962.0,135.0 C963.8,132.2 968.3,133.5 972.0,133.5 C975.7,133.5 980.5,134.5 984.0,135.0 C987.5,135.5 991.2,135.3 993.0,136.5 C994.8,137.7 995.2,140.1 994.5,142.0 C993.8,143.9 990.9,146.8 989.0,148.0 C987.1,149.2 983.8,147.3 983.0,149.0 C982.2,150.7 983.7,155.3 984.0,158.0 C984.3,160.7 987.0,163.5 985.0,165.0 C983.0,166.5 975.8,166.8 972.0,167.0 C968.2,167.2 963.8,168.8 962.0,166.0 C960.2,163.2 961.0,155.2 961.0,150.0 C961.0,144.8 960.2,137.8 962.0,135.0Z" fill="#7e5068"/>
<path d="M955,147 L963,146" stroke="#7e5068" stroke-width="3"/>
<path d="M879.8,314.0 C882.3,313.0 887.9,310.8 895.0,308.0 C902.1,305.2 912.3,300.4 922.4,297.0 C932.5,293.6 945.3,289.6 955.4,287.3 C965.5,285.0 974.0,284.1 982.9,283.2 C991.8,282.3 1004.6,282.0 1009.0,281.8" stroke="#7e5068" stroke-width="2" fill="none" stroke-linecap="round" stroke-linejoin="round"/>
<path d="M893.0,309.0 C897.9,307.1 912.0,301.0 922.4,297.5 C932.8,294.0 945.3,290.2 955.4,288.0 C965.5,285.8 974.1,285.0 982.9,284.0 C991.7,283.0 1003.8,282.3 1008.0,282.0" stroke="#7e5068" stroke-width="6.5" fill="none" stroke-linecap="round" stroke-linejoin="round"/>
<path d="M891.5,313.5 L897.9,303.3 L898.3,311.0 L904.6,300.8 L905.0,308.6 L911.4,298.4 L911.8,306.2 L918.2,296.0 L918.6,303.9 L924.9,293.8 L925.3,301.7 L931.7,291.7 L932.1,299.7 L938.5,289.7 L938.9,297.8 L945.2,287.9 L945.6,296.0 L952.0,286.2 L952.4,294.4 L958.8,284.7 L959.1,293.0 L965.5,283.3 L965.9,291.7 L972.3,282.2 L972.7,290.6 L979.1,281.1 L979.4,289.6 L985.8,280.2 L986.2,288.7 L992.6,279.3 L993.0,287.9 L999.4,278.6 L999.7,287.2 L1006.1,277.9 L1006.5,286.5" stroke="#7e5068" stroke-width="1.6" fill="none"/>
<path d="M945.8,370.5 C943.7,371.5 936.4,372.9 933.4,376.6 C930.4,380.4 929.0,386.6 928.0,393.0 C927.0,399.4 928.8,406.9 927.2,414.9 C925.6,422.9 921.6,432.8 918.5,441.0 C915.4,449.2 910.7,457.5 908.3,464.3 C905.9,471.1 904.0,477.1 904.0,481.7 C904.0,486.3 907.6,490.2 908.3,491.9" stroke="#7e5068" stroke-width="3.2" fill="none" stroke-linecap="round" stroke-linejoin="round"/>
<path d="M928.5,428.0 C927.2,430.0 923.1,436.0 921.0,440.0 C918.9,444.0 917.4,446.0 915.6,452.0 C913.9,458.0 910.0,468.4 910.5,476.0 C911.0,483.6 917.2,494.1 918.5,497.7" stroke="#7e5068" stroke-width="2.6" fill="none" stroke-linecap="round" stroke-linejoin="round"/>
<path d="M936.0,483.2 C936.0,485.4 936.0,494.1 936.0,496.3" stroke="#7e5068" stroke-width="3.2" fill="none" stroke-linecap="round" stroke-linejoin="round"/>
<path d="M941.7,481.7 C941.7,483.9 941.7,492.6 941.7,494.8" stroke="#7e5068" stroke-width="3.2" fill="none" stroke-linecap="round" stroke-linejoin="round"/>
<path d="M936.0,489.0 C937.0,489.0 940.8,489.0 941.7,489.0" stroke="#7e5068" stroke-width="2.2" fill="none" stroke-linecap="round" stroke-linejoin="round"/>
<path d="M944.7,480.3 C948.6,479.8 960.6,477.2 967.9,477.4 C975.2,477.6 984.9,481.0 988.3,481.7" stroke="#7e5068" stroke-width="2.6" fill="none" stroke-linecap="round" stroke-linejoin="round"/>
<path d="M972.3,489.0 C974.7,491.2 984.4,499.9 986.8,502.1" stroke="#7e5068" stroke-width="4.5" fill="none" stroke-linecap="round" stroke-linejoin="round"/>
<path d="M983.9,481.7 C981.5,484.6 971.8,496.3 969.4,499.2" stroke="#7e5068" stroke-width="4" fill="none" stroke-linecap="round" stroke-linejoin="round"/>
<ellipse cx="972" cy="497" rx="4" ry="3" fill="#7e5068"/>
<path d="M961.3,510.7 C961.6,512.9 963.8,518.0 963.0,524.0 C962.2,530.0 957.8,542.8 956.8,546.6" stroke="#7e5068" stroke-width="2" fill="none" stroke-linecap="round" stroke-linejoin="round"/>
</svg>

</div>
<div id="zoom" class="abs"><span style="position:absolute;left:8px;top:6.5px;font-weight:bold;letter-spacing:-0.6px;color:#3a3a3a">79%</span><svg style="position:absolute;left:33px;top:7px" width="14" height="10"><path d="M2,8 L7,3 L12,8" stroke="#555" stroke-width="1.1" fill="none"/></svg></div>
<div id="status" class="abs">
<span style="left:5px">幅: 78.0 mm</span><span style="left:83px">高さ: 120.5 mm</span><span style="left:174px">色数: 5</span><span style="left:229px">ステッチ: 11894</span>
</div>
</body></html>
